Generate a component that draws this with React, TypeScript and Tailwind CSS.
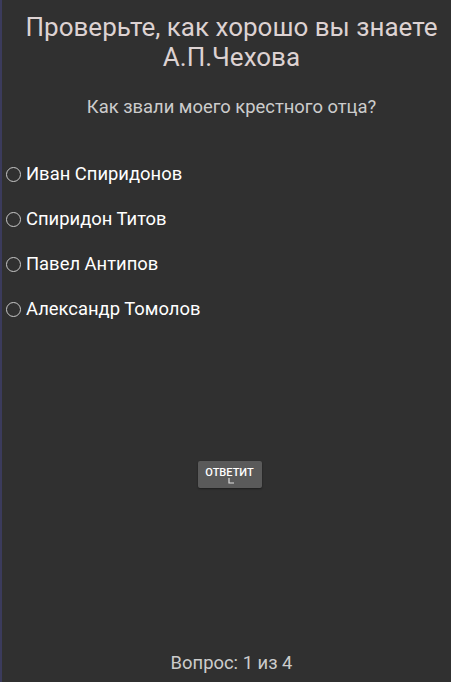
import { useState } from "react"

const answers = ["Иван Спиридонов", "Спиридон Титов", "Павел Антипов", "Александр Томолов"]

export default function App() {
  const [picked, setPicked] = useState<number | null>(null)

  return (
    <div className="h-[682px] w-[451px] flex flex-col bg-[#303030] border-l-2 border-[#3b3b5c] font-['Roboto',sans-serif] overflow-hidden">
      <h1 className="pt-[12px] pl-[10px] text-center text-[26px] leading-[30px] text-[#ddd2d2]">
        Проверьте, как хорошо вы знаете
        <br />
        А.П.Чехова
      </h1>
      <p className="mt-[24px] pl-[10px] text-center text-[18.4px] leading-[22px] text-[#cccccc]">
        Как звали моего крестного отца?
      </p>

      <ul className="mt-[45px] flex flex-col gap-[23px]">
        {answers.map((a, i) => (
          <li
            key={a}
            onClick={() => setPicked(i)}
            className="flex items-center gap-[5px] pl-[4px] text-[18.4px] leading-[22px] text-white cursor-pointer"
          >
            <span className="w-[15px] h-[15px] rounded-full border-[1.5px] border-[#c8c8c8] flex items-center justify-center">
              {picked === i && <span className="w-[7px] h-[7px] rounded-full bg-[#c8c8c8]" />}
            </span>
            {a}
          </li>
        ))}
      </ul>

      <div className="mt-[141px] flex justify-center pl-[6px]">
        <button className="relative w-[64px] h-[27px] rounded-[2px] bg-[#5a5a5a] text-white text-[11px] font-medium leading-none pb-[4px] shadow-[0_1px_2px_rgba(0,0,0,0.4)]">
          ОТВЕТИТ
          <svg className="absolute left-[30px] top-[17px]" width="7" height="6" viewBox="0 0 7 6">
            <path d="M1 0 L1 5 L6 5" stroke="#ddd" strokeWidth="1.2" fill="none" />
          </svg>
        </button>
      </div>

      <div className="mt-auto mb-[8px] pl-[10px] text-center text-[18.4px] leading-[22px] text-[#cccccc]">
        Вопрос: 1 из 4
      </div>
    </div>
  )
}
